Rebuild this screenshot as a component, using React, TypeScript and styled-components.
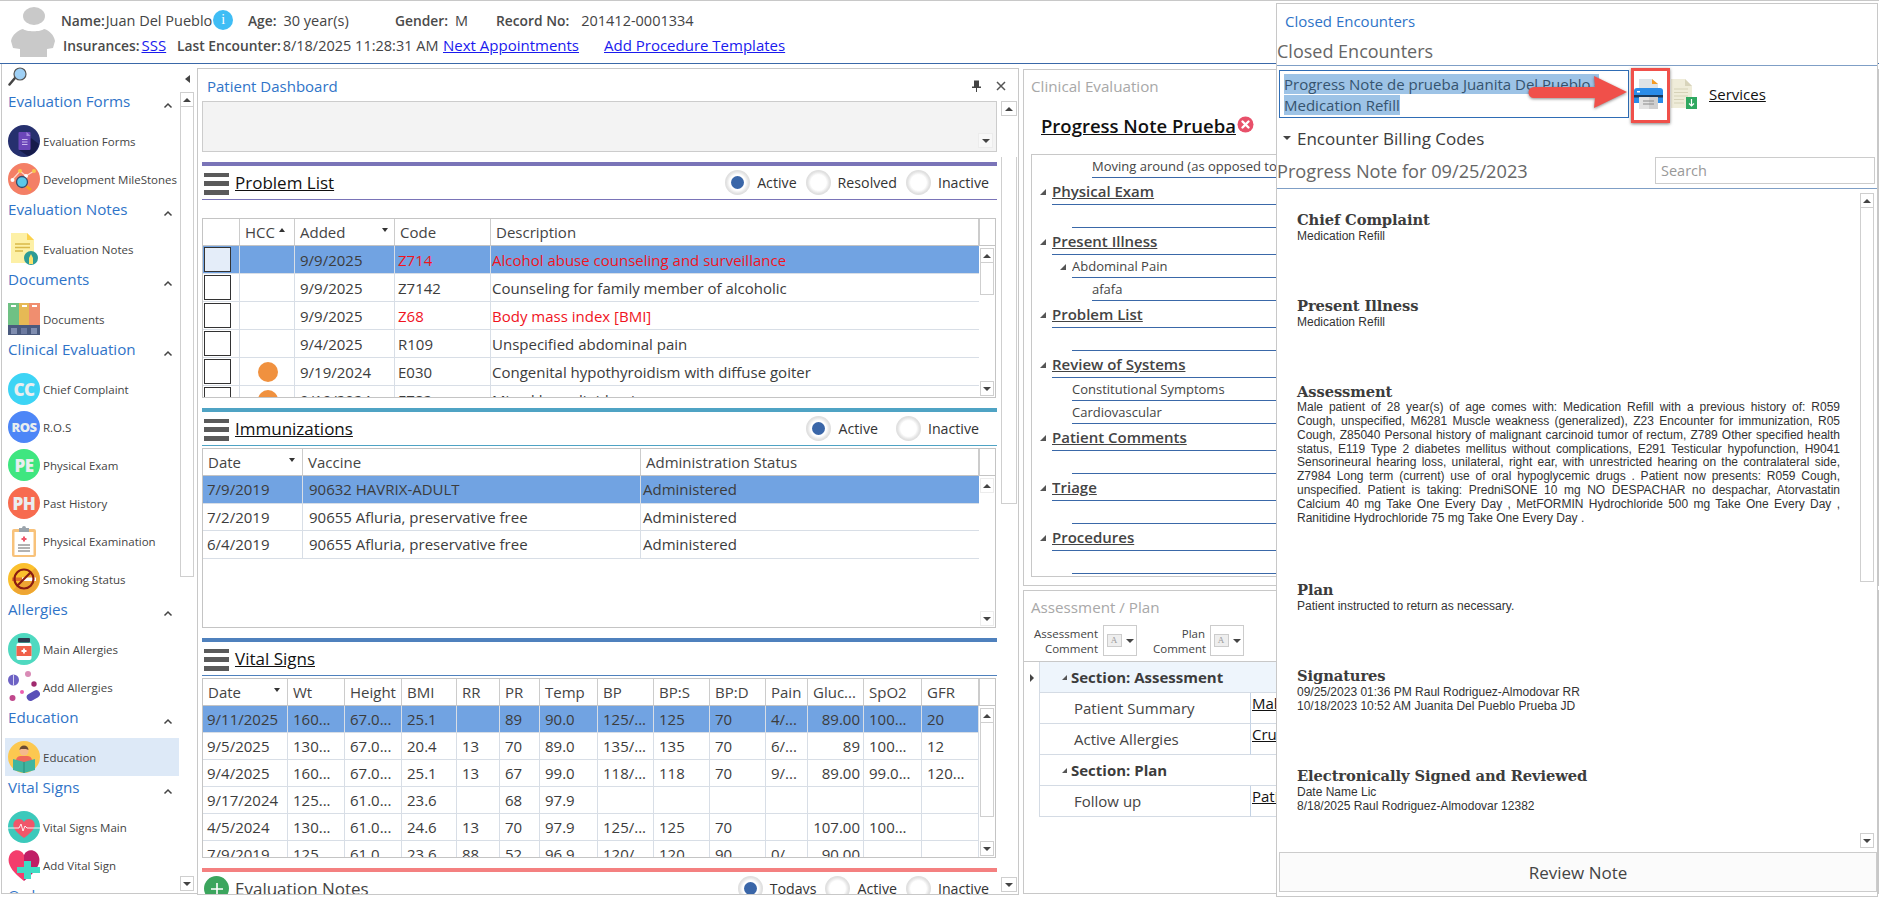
import React from 'react';
import styled, { createGlobalStyle } from 'styled-components';

const Global = createGlobalStyle`
  html, body { margin: 0; padding: 0; background: #fff; overflow: hidden; }
  * { box-sizing: border-box; }
  body { font-family: "Open Sans", "Noto Sans", Arial, sans-serif; color: #333; }
`;

const BLUE_LINE = '#3a68a8';
const TITLE_BLUE = '#2f74c8';

const Page = styled.div`
  position: relative; width: 1879px; height: 898px; overflow: hidden; background: #fff;
  border-top: 1px solid #c8c8c8; display: flex; flex-direction: column;
`;

/* Header */
const Header = styled.header`
  height: 63px; flex: none; border-bottom: 1px solid ${BLUE_LINE}; display: flex; padding-left: 11px; padding-top: 6px;
`;
const HeaderInfo = styled.div`
  margin-left: 6px; display: flex; flex-direction: column; gap: 3px; padding-top: 2px;
`;
const HeaderRow = styled.div<{ $indent?: number }>`
  display: flex; align-items: center; height: 22px; margin-left: ${p => p.$indent ?? 0}px; font-size: 14px; white-space: nowrap;
`;
const Field = styled.div<{ $w: number; $gap?: number }>`
  width: ${p => p.$w}px; display: flex; align-items: center; gap: ${p => p.$gap ?? 4}px; flex: none;
`;
const FieldLabel = styled.span`
  font-weight: 600; color: #4a4a4a; font-size: 13.8px;
`;
const FieldValue = styled.span`
  color: #444; font-size: 14.5px;
`;
const HeaderLink = styled.a`
  color: #1a1aee; text-decoration: underline; font-size: 15px;
`;
const InfoBadge = styled.span`
  width: 20px; height: 20px; border-radius: 50%; background: #3fbdf5; color: #fff; font-size: 14px;
  display: inline-flex; align-items: center; justify-content: center; margin-left: 0; flex: none; font-family: "Liberation Serif", serif;
`;

/* Body */
const Body = styled.main`
  flex: 1; display: flex; min-height: 0; padding-bottom: 3px;
`;

/* Sidebar */
const Sidebar = styled.aside`
  width: 196px; flex: none; margin-left: 1px; border-left: 1px solid #c8c8c8; border-bottom: 1px solid #c8c8c8;
  display: flex; flex-direction: column; margin-bottom: 1px; overflow: hidden;
`;
const SideTop = styled.div`
  height: 26px; flex: none; display: flex; align-items: center; justify-content: space-between; padding: 0 7px 0 6px;
`;
const CollapseArrow = styled.span`
  width: 0; height: 0; border-top: 4px solid transparent; border-bottom: 4px solid transparent; border-right: 5px solid #444; margin-top: 3px;
`;
const SideScroll = styled.div`
  flex: 1; display: flex; min-height: 0;
`;
const SideList = styled.div`
  width: 177px; flex: none; overflow: hidden; padding-left: 3px;
`;
const SideHeading = styled.div`
  height: 32px; display: flex; justify-content: space-between; padding: 0 6px 0 3px; color: ${TITLE_BLUE}; font-size: 15.2px; line-height: 22px; white-space: nowrap;
`;
const SideChevron = styled.svg`
  margin-top: 12px; flex: none;
`;
const SideItem = styled.div<{ $active?: boolean }>`
  height: 38px; display: flex; align-items: center; padding-left: 3px; gap: 3px; font-size: 11.5px; color: #444; white-space: nowrap;
  background: ${p => (p.$active ? '#dde9f7' : 'transparent')};
`;
const LetterBadge = styled.span<{ $bg: string; $size?: number }>`
  width: 32px; height: 32px; border-radius: 50%; background: ${p => p.$bg}; color: #e9eef0; font-weight: 800;
  font-size: ${p => p.$size ?? 17}px; display: flex; align-items: center; justify-content: center; flex: none; letter-spacing: -0.5px;
`;

/* Scrollbars */
const ScrollCol = styled.div<{ $w?: number; $mt?: number; $mb?: number; $ml?: number }>`
  width: ${p => p.$w ?? 15}px; flex: none; display: flex; flex-direction: column;
  margin-top: ${p => p.$mt ?? 0}px; margin-bottom: ${p => p.$mb ?? 0}px; margin-left: ${p => p.$ml ?? 0}px;
`;
const ScrollBtn = styled.div<{ $down?: boolean; $muted?: boolean }>`
  height: 15px; flex: none; border: 1px solid ${p => (p.$muted ? '#ececec' : '#cfcfcf')}; display: flex; align-items: center; justify-content: center;
  &::after {
    content: ''; width: 0; height: 0; border-left: 4px solid transparent; border-right: 4px solid transparent;
    ${p => (p.$down ? 'border-top: 4px solid #444;' : 'border-bottom: 4px solid #444;')}
  }
`;
const ScrollThumb = styled.div<{ $h: number; $mt?: number }>`
  height: ${p => p.$h}px; flex: none; border: 1px solid #cfcfcf; border-top: 0; margin-top: ${p => p.$mt ?? 0}px;
`;
const ScrollGap = styled.div`
  flex: 1;
`;

/* Dashboard */
const Dashboard = styled.section`
  width: 822px; flex: none; margin-top: 4px; border: 1px solid #c8c8c8; display: flex; flex-direction: column; overflow: hidden; padding-left: 4px;
`;
const PanelBar = styled.div`
  height: 32px; flex: none; display: flex; align-items: center; padding: 2px 12px 0 5px;
`;
const PanelTitle = styled.div`
  color: ${TITLE_BLUE}; font-size: 15px; flex: 1;
`;
const DashRow = styled.div`
  flex: 1; display: flex; min-height: 0;
`;
const DashMain = styled.div`
  width: 795px; flex: none; overflow: hidden;
`;
const GreyBox = styled.div`
  height: 51px; background: #f3f3f3; border: 1px solid #ccc; display: flex; justify-content: flex-end; align-items: flex-end; padding: 0 3px 3px 0;
`;
const GreyBoxBtn = styled(ScrollBtn)`
  width: 15px; background: #f8f8f8;
`;
const Section = styled.div`
  margin-top: 10px;
`;
const SectionBar = styled.div<{ $c: string }>`
  height: 4px; background: ${p => p.$c};
`;
const SectionHead = styled.div<{ $c: string; $pr?: number }>`
  height: 34px; border-bottom: 1px solid ${p => p.$c}; display: flex; align-items: center; padding: 0 ${p => p.$pr ?? 8}px 0 2px; gap: 6px;
`;
const Burger = styled.div`
  width: 25px; height: 22px; flex: none; display: flex; flex-direction: column; justify-content: space-between; margin-top: 2px;
  & > i { display: block; height: 4.5px; background: #5a5a5a; }
`;
const SectionTitle = styled.div<{ $plain?: boolean }>`
  font-size: 17px; color: ${p => (p.$plain ? '#444' : '#111')}; text-decoration: ${p => (p.$plain ? 'none' : 'underline')}; flex: 1;
`;
const RadioGroup = styled.div<{ $gap: number }>`
  display: flex; align-items: center; gap: ${p => p.$gap}px;
`;
const RadioItem = styled.div`
  display: flex; align-items: center; gap: 7px; font-size: 14.2px; color: #333;
`;
const RadioRing = styled.span<{ $on?: boolean }>`
  width: 25px; height: 25px; border-radius: 50%; flex: none; display: flex; align-items: center; justify-content: center;
  background: radial-gradient(circle, #fff 0, #fff 44%, #e3e3e3 62%, #d4d4d4 85%, #efefef 100%);
  &::after { content: ''; width: 13px; height: 13px; border-radius: 50%; background: ${p => (p.$on ? '#3a66a8' : '#fff')}; }
`;
const GreenPlus = styled.span`
  width: 25px; height: 25px; border-radius: 50%; background: #3ba55d; color: #fff; flex: none; display: flex; align-items: center; justify-content: center; margin-top: -4px; margin-bottom: -4px;
`;

/* Tables */
const TableFrame = styled.div<{ $mt: number }>`
  margin-top: ${p => p.$mt}px; height: 180px; border: 1px solid #c4c4c4; display: flex; overflow: hidden; width: 794px;
`;
const TableClip = styled.div`
  width: 776px; flex: none; overflow: hidden;
`;
const Table = styled.table`
  border-collapse: separate; border-spacing: 0; table-layout: fixed; width: 776px;
`;
const Col = styled.col<{ $w: number }>`
  width: ${p => p.$w}px;
`;
const Th = styled.th`
  height: 27px; font-weight: 400; font-size: 15px; color: #444; text-align: left; padding: 0 0 0 5px; border-right: 1px solid #ccc; border-bottom: 1px solid #c4c4c4; white-space: nowrap; overflow: hidden;
`;
const ThInner = styled.span<{ $gap?: number }>`
  display: flex; align-items: center;
  & > b { width: 0; height: 0; border-left: 3.5px solid transparent; border-right: 3.5px solid transparent; margin-left: ${p => p.$gap ?? 4}px; margin-bottom: 4px; }
`;
const SortUp = styled.b`
  border-bottom: 4px solid #333;
`;
const SortDown = styled.b`
  border-top: 4px solid #333;
`;
const Tr = styled.tr<{ $h: number; $sel?: boolean }>`
  height: ${p => p.$h}px; background: ${p => (p.$sel ? '#71a3e2' : 'transparent')};
`;
const Td = styled.td<{ $pad?: number; $red?: boolean; $right?: boolean }>`
  padding: 0 ${p => (p.$right ? 3 : 0)}px 0 ${p => p.$pad ?? 5}px; font-size: 15px; color: ${p => (p.$red ? '#f0141e' : '#3c3c3c')};
  border-right: 1px solid #d8dee6; border-bottom: 1px solid #d8dee6; white-space: nowrap; overflow: hidden; text-align: ${p => (p.$right ? 'right' : 'left')};
`;
const TdWide = styled(Td)`
  border-right: 0;
`;
const CheckCell = styled.span<{ $sel?: boolean }>`
  display: block; width: 27px; height: 25px; border: 1px solid #333; background: ${p => (p.$sel ? '#e4edf9' : '#fff')};
`;
const HccDot = styled.span`
  display: block; width: 20px; height: 20px; border-radius: 50%; background: #f0913f; margin-left: 18px;
`;
const SideHeadCell = styled.div`
  height: 27px; flex: none; border-left: 1px solid #ccc; border-bottom: 1px solid #c4c4c4;
`;
const TableSide = styled.div`
  flex: 1; display: flex; flex-direction: column;
`;
const SideScrollWrap = styled.div`
  flex: 1; display: flex; flex-direction: column; padding: 2px 1px 1px 1px; min-height: 0;
`;

/* Clinical column */
const ClinicalCol = styled.div`
  margin-left: 4px; margin-top: 5px; flex: 1; display: flex; flex-direction: column; gap: 4px; min-width: 0;
`;
const ClinicalPanel = styled.section`
  height: 517px; flex: none; border: 1px solid #c8c8c8; padding: 0 7px; overflow: hidden;
`;
const GreyTitle = styled.div`
  color: #a8a8a8; font-size: 15.2px; height: 34px; line-height: 32px;
`;
const NoteHead = styled.div`
  display: flex; align-items: center; gap: 1px; height: 50px; padding: 0 0 8px 10px;
`;
const NoteName = styled.div`
  font-size: 18.5px; font-weight: 600; color: #111; text-decoration: underline; white-space: nowrap;
`;
const TreeBox = styled.div`
  height: 423px; border: 1px solid #c8c8c8; overflow: hidden;
`;
const TreeLine = styled.div<{ $h: number }>`
  height: ${p => p.$h}px; display: flex;
`;
const TreeSlot = styled.div<{ $w: number }>`
  width: ${p => p.$w}px; flex: none; display: flex; justify-content: flex-end; align-items: center; padding-right: 6px;
`;
const ExpandMark = styled.span`
  width: 0; height: 0; border-style: solid; border-width: 0 0 6px 6px; border-color: transparent transparent #555 transparent;
`;
const TreeText = styled.div<{ $bold?: boolean }>`
  flex: 1; border-bottom: 1px solid ${BLUE_LINE}; white-space: nowrap; overflow: hidden; display: flex; align-items: center; color: #444;
  font-size: ${p => (p.$bold ? 15 : 13)}px; font-weight: ${p => (p.$bold ? 600 : 400)}; text-decoration: ${p => (p.$bold ? 'underline' : 'none')};
`;
const AssessPanel = styled.section`
  flex: 1; border: 1px solid #c8c8c8; margin-bottom: 1px; overflow: hidden;
`;
const AssessTitle = styled(GreyTitle)`
  padding-left: 7px;
`;
const AssessTools = styled.div`
  height: 36px; display: flex; align-items: flex-start; padding-left: 2px; gap: 16px;
`;
const ToolGroup = styled.div`
  display: flex; gap: 5px; align-items: center;
`;
const ToolLabel = styled.div<{ $w: number }>`
  width: ${p => p.$w}px; text-align: right; font-size: 11.5px; line-height: 15px; color: #444;
`;
const ToolBox = styled.div`
  width: 34px; height: 31px; border: 1px solid #ccc; display: flex; align-items: center; justify-content: center; gap: 4px;
  & > i { width: 0; height: 0; border-left: 4px solid transparent; border-right: 4px solid transparent; border-top: 4px solid #444; }
`;
const FontGlyph = styled.span`
  width: 15px; height: 13px; border: 1px solid #ccc; background: #eee; color: #999; font-size: 9px; line-height: 11px; text-align: center; font-family: "Liberation Serif", serif;
`;
const GridWrap = styled.div`
  border-top: 1px solid #c8c8c8;
`;
const GridRow = styled.div`
  height: 31px; display: flex;
`;
const GridSelector = styled.div`
  width: 16px; flex: none; display: flex; align-items: center; justify-content: center;
  border-right: 1px solid #d4dbe4;
`;
const SelectorMark = styled.span`
  width: 0; height: 0; border-top: 4px solid transparent; border-bottom: 4px solid transparent; border-left: 4px solid #444;
`;
const GroupCell = styled.div<{ $hl?: boolean }>`
  flex: 1; display: flex; align-items: center; padding-left: 22px; gap: 4px; font-weight: 700; font-size: 15px; color: #3c3c3c;
  background: ${p => (p.$hl ? '#eef5fc' : '#fff')}; border-bottom: 1px solid #d4dbe4;
`;
const SmallExpand = styled(ExpandMark)`
  border-width: 0 0 5px 5px;
`;
const LabelCell = styled.div`
  width: 210px; flex: none; padding: 0 0 1px 34px; display: flex; align-items: center; font-size: 15px; color: #444;
  border-bottom: 1px solid #d4dbe4;
`;
const ValueCell = styled.div`
  flex: 1; border-left: 1px solid #c3d2e4; border-bottom: 1px solid #d4dbe4; font-size: 15px; line-height: 20px; color: #111; padding-left: 1px; overflow: hidden; white-space: nowrap;
  text-decoration: underline;
`;

/* Flyout */
const Flyout = styled.aside`
  position: absolute; left: 1276px; top: 2px; width: 602px; height: 894px; background: #fff; border: 1px solid #c8c8c8; display: flex; flex-direction: column;
`;
const FlyTitle = styled.div`
  height: 34px; flex: none; padding: 4px 0 0 8px; color: ${TITLE_BLUE}; font-size: 15px; line-height: 26px;
`;
const FlyBig = styled.div`
  height: 28px; flex: none; border-bottom: 1px solid #7f9fc6; font-size: 18px; color: #666; line-height: 26px;
`;
const PickerRow = styled.div`
  height: 58px; flex: none; display: flex; align-items: flex-start; padding: 4px 0 0 2px;
`;
const Dropdown = styled.div`
  width: 350px; height: 48px; flex: none; border: 1px solid #2f6db5; padding: 3px 0 0 4px; font-size: 15px; line-height: 21px; color: #35536f; white-space: nowrap; overflow: hidden;
`;
const DropText = styled.span`
  background: #9dc3e6;
`;
const PrinterSlot = styled.div`
  margin-left: 5px; margin-top: 9px; flex: none; display: flex; gap: 7px; align-items: center;
`;
const ServicesLink = styled.a`
  margin-left: 5px; font-size: 15px; color: #111; text-decoration: underline;
`;
const RedBox = styled.div`
  position: absolute; left: 354px; top: 64px; width: 39px; height: 55px; border: 3px solid #f0504a; box-shadow: 0 1px 3px rgba(0,0,0,.5);
`;
const ArrowOverlay = styled.svg`
  position: absolute; left: 250px; top: 70px; filter: drop-shadow(0 1px 1.5px rgba(0,0,0,.45));
`;
const BillingRow = styled.div`
  height: 30px; flex: none; display: flex; align-items: center; padding: 0 0 2px 6px; gap: 6px; font-size: 17px; color: #3c3c3c;
`;
const DownMark = styled.span`
  width: 0; height: 0; border-left: 4px solid transparent; border-right: 4px solid transparent; border-top: 4px solid #444;
`;
const NoteTitleRow = styled.div`
  height: 35px; flex: none; display: flex; align-items: center; justify-content: space-between; padding: 0 2px 1px 0; border-bottom: 1px solid #7f9fc6;
`;
const NoteTitle = styled.div`
  font-size: 18.2px; color: #666;
`;
const SearchBox = styled.div`
  width: 220px; height: 27px; border: 1px solid #ccc; font-size: 14.5px; color: #999; line-height: 26px; padding-left: 5px;
`;
const NoteRow = styled.div`
  flex: 1; display: flex; min-height: 0; justify-content: space-between; padding-right: 3px;
`;
const NoteBody = styled.div`
  width: 563px; padding: 22px 0 0 20px; font-family: "Liberation Sans", Arial, sans-serif; font-size: 12px; line-height: 14px; color: #333; overflow: hidden;
`;
const Block = styled.div<{ $after?: number }>`
  margin-bottom: ${p => p.$after ?? 54}px;
`;
const BlockHead = styled.div`
  font-family: "DejaVu Serif", "Liberation Serif", serif; font-weight: 700; font-size: 14.7px; line-height: 18px; color: #3c3c3c; letter-spacing: -0.1px;
`;
const JustLine = styled.div<{ $last?: boolean }>`
  line-height: 13.85px; height: 13.85px; white-space: normal; text-align: justify; text-align-last: ${p => (p.$last ? 'left' : 'justify')};
`;
const ReviewBtn = styled.div`
  height: 40px; flex: none; margin: 0 0 4px 2px; border: 1px solid #ccc; background: #fbfbfb; display: flex; align-items: center; justify-content: center; font-size: 17px; color: #444;
`;

/* Drawings */
const Search = () => (
  <svg width="20" height="20" viewBox="0 0 20 20">
    <path d="M7 11 L1.5 17.5" stroke="#444" strokeWidth="2.5" strokeLinecap="round" />
    <circle cx="12" cy="7" r="6" fill="#9fd0f5" stroke="#555" strokeWidth="1.2" />
  </svg>
);
const Avatar = () => (
  <svg width="44" height="50" viewBox="0 0 44 50" style={{ flex: 'none' }}>
    <ellipse cx="23" cy="9" rx="11" ry="9" fill="#c9c9c9" />
    <path d="M12 22 C15 25 30 25 33 22 C38 23 43 28 44 34 L42 41 L36 42 L36 50 L9 50 L9 42 L2 41 L0 34 C1 28 7 23 12 22Z" fill="#c9c9c9" />
  </svg>
);
const Chevron = () => (
  <SideChevron width="10" height="7" viewBox="0 0 10 7"><polyline points="1.5,5.5 5,2 8.5,5.5" fill="none" stroke="#444" strokeWidth="1.5" /></SideChevron>
);
const FormsIcon = () => (
  <svg width="32" height="32" viewBox="0 0 32 32">
    <circle cx="16" cy="16" r="16" fill="#26306e" />
    <path d="M11 25 L23 13 L31 19 A16 16 0 0 1 20 31Z" fill="#161b4a" />
    <rect x="10.5" y="7" width="12" height="18" rx="1" fill="#6b46b9" />
    <path d="M18.5 7 L22.5 11 L18.5 11Z" fill="#a78be0" />
    <path d="M14 14.5h5.5M14 17h5.5M14 19.5h5.5" stroke="#c9b8ee" strokeWidth="1" />
  </svg>
);
const DevIcon = () => (
  <svg width="32" height="32" viewBox="0 0 32 32">
    <circle cx="16" cy="16" r="16" fill="#f47f66" />
    <polyline points="4,17 12,8 18,13 26,8" fill="none" stroke="#ffd9cc" strokeWidth="1.2" />
    <circle cx="12" cy="8" r="2" fill="#f7c94f" /><circle cx="18" cy="13" r="2" fill="#fff" /><circle cx="26" cy="8" r="2" fill="#f7c94f" /><circle cx="4.5" cy="17" r="2" fill="#fff" />
    <path d="M18 23 L23 27" stroke="#f5a623" strokeWidth="2.5" />
    <circle cx="14" cy="19" r="5.5" fill="#5bc8e8" stroke="#374a6b" strokeWidth="1.3" />
  </svg>
);
const NotesIcon = () => (
  <svg width="32" height="32" viewBox="0 0 32 32">
    <path d="M3 0 H19 L26 7 V30 H3Z" fill="#fdf0a6" />
    <path d="M19 0 L26 7 H19Z" fill="#fbd24e" />
    <path d="M7 11h15M7 14.5h15M7 18h8" stroke="#d9b94a" strokeWidth="1.4" />
    <circle cx="23" cy="25" r="7" fill="#2d9c96" />
    <path d="M21 31 V25 L23 21 L25 25 V31Z" fill="#fde26a" />
  </svg>
);
const DocsIcon = () => (
  <svg width="32" height="32" viewBox="0 0 32 32">
    <rect width="11" height="23" fill="#6fc184" /><rect x="11" width="10" height="23" fill="#e6b955" /><rect x="21" width="11" height="23" fill="#f08e6f" />
    <path d="M3 3h5M14 3h5M24 3h5" stroke="#fff" strokeWidth="2" />
    <rect y="22" width="32" height="10" fill="#4a5a7e" />
    <rect x="3" y="25" width="6" height="6" fill="#7f8db0" /><rect x="13" y="25" width="6" height="6" fill="#6c7aa0" /><rect x="23" y="25" width="6" height="6" fill="#7f8db0" />
  </svg>
);
const ClipIcon = () => (
  <svg width="32" height="32" viewBox="0 0 32 32">
    <rect x="4" y="4" width="24" height="28" rx="2" fill="#f8c27a" />
    <rect x="6.5" y="7" width="19" height="23" fill="#fff" />
    <path d="M11 7 V3 H14 A2 2 0 0 1 18 3 H21 V7Z" fill="#9aa3ab" />
    <path d="M16 11.5 v5 M13.5 14 h5" stroke="#f0566a" strokeWidth="2" />
    <path d="M10 20h12M10 23h12M10 26h12" stroke="#666" strokeWidth="1" />
  </svg>
);
const SmokeIcon = () => (
  <svg width="32" height="32" viewBox="0 0 32 32">
    <circle cx="16" cy="16" r="16" fill="#fbc02d" />
    <path d="M5 27 L27 5 A16 16 0 0 1 16 32 A16 16 0 0 1 5 27Z" fill="#eea533" />
    <rect x="4" y="14.5" width="10" height="3.5" fill="#e0722b" /><rect x="14" y="14.5" width="14" height="3.5" fill="#fff" />
    <circle cx="16" cy="16" r="9.5" fill="none" stroke="#8a1c12" strokeWidth="2.2" />
    <path d="M9.5 22.5 L22.5 9.5" stroke="#8a1c12" strokeWidth="2.2" />
  </svg>
);
const BottleIcon = () => (
  <svg width="32" height="32" viewBox="0 0 32 32">
    <circle cx="16" cy="16" r="16" fill="#4fd9c0" />
    <rect x="10" y="5" width="12" height="4.5" rx="1" fill="#2e3a4d" />
    <rect x="8.5" y="10" width="15" height="17" rx="2" fill="#fff" />
    <rect x="8.5" y="13" width="15" height="10" fill="#f0604a" />
    <path d="M16 15.5v5M13.5 18h5" stroke="#fff" strokeWidth="1.8" />
  </svg>
);
const PillsIcon = () => (
  <svg width="32" height="32" viewBox="0 0 32 32">
    <circle cx="5.5" cy="9" r="5.5" fill="#6d62c4" /><path d="M5.5 3.5v11" stroke="#d8d4f2" strokeWidth="1" />
    <circle cx="20" cy="3" r="3" fill="#d98bb6" /><circle cx="26" cy="13" r="2.7" fill="#a02a6e" />
    <circle cx="4.5" cy="27" r="3" fill="#c0488c" /><circle cx="14" cy="21" r="2" fill="#ec5fb0" />
    <rect x="18.5" y="21" width="14" height="7.5" rx="3.7" fill="#5a50b8" transform="rotate(-30 25 25)" />
  </svg>
);
const EduIcon = () => (
  <svg width="32" height="32" viewBox="0 0 32 32">
    <circle cx="16" cy="16" r="16" fill="#fcc850" />
    <circle cx="16" cy="10" r="4.5" fill="#f5b98d" />
    <path d="M11.5 9 A4.5 4.5 0 0 1 20.5 9 L18 8 L13 8Z" fill="#6b4a32" />
    <path d="M8 26 V19 A5 5 0 0 1 13 15 H19 A5 5 0 0 1 24 19 V26Z" fill="#ef6a5a" />
    <path d="M5 18 L16 21 L27 18 V29 L16 32 L5 29Z" fill="#3fb5a0" />
    <path d="M16 21 V32" stroke="#2a8c7b" strokeWidth="1" />
  </svg>
);
const VitalIcon = () => (
  <svg width="32" height="32" viewBox="0 0 32 32">
    <circle cx="16" cy="16" r="16" fill="#3cc9bb" />
    <path d="M16 27 C6 20 4 15 6 11 C8 7 14 7 16 11 C18 7 24 7 26 11 C28 15 26 20 16 27Z" fill="#f0566a" />
    <polyline points="0,17 11,17 13,13 15,20 17,15 19,17 32,17" fill="none" stroke="#fff" strokeWidth="0.9" />
  </svg>
);
const AddVitalIcon = () => (
  <svg width="32" height="32" viewBox="0 0 32 32">
    <path d="M16 32 C4 23 -1 15 1 8 C3 0 13 -1 16 6 V32Z" fill="#f43d6c" />
    <path d="M16 32 C28 23 33 15 31 8 C29 0 19 -1 16 6 V32Z" fill="#c01e66" />
    <path d="M16 13 h7 v6 h9 v6 h-9 v6 h-7 v-6 h-7 v-6 h7Z" fill="#3fdcc4" transform="translate(0,-1)" />
  </svg>
);
const RemoveIcon = () => (
  <svg width="17" height="17" viewBox="0 0 17 17" style={{ flex: 'none', marginTop: -2 }}>
    <circle cx="8.5" cy="8.5" r="8" fill="#e8506a" />
    <path d="M5.5 5.5 L11.5 11.5 M11.5 5.5 L5.5 11.5" stroke="#fff" strokeWidth="2.4" strokeLinecap="round" />
  </svg>
);
const PinIcon = () => (
  <svg width="11" height="12" viewBox="0 0 11 12" style={{ marginRight: 14 }}>
    <path d="M3 0.5 H8 V6.5 H10 V8 H6 V12 H5 V8 H1 V6.5 H3Z" fill="#444" />
  </svg>
);
const CloseIcon = () => (
  <svg width="10" height="10" viewBox="0 0 10 10"><path d="M1 1 L9 9 M9 1 L1 9" stroke="#555" strokeWidth="1.5" /></svg>
);
const PlusGlyph = () => (
  <svg width="14" height="14" viewBox="0 0 14 14"><path d="M7 1v12M1 7h12" stroke="#fff" strokeWidth="1.6" /></svg>
);
const PrinterIcon = () => (
  <svg width="30" height="30" viewBox="0 0 30 30" style={{ flex: 'none' }}>
    <path d="M5 0 H18 L24 5 V13 H5Z" fill="#dfe3e6" />
    <path d="M18 0 L24 5 H18Z" fill="#f59b23" />
    <path d="M3 9 H26 A3 3 0 0 1 29 12 V24 H0 V12 A3 3 0 0 1 3 9Z" fill="#2a8ce8" />
    <rect x="0" y="16" width="29" height="2.5" fill="#1a3a5c" />
    <rect x="3" y="12" width="3" height="1.5" fill="#fff" />
    <rect x="5" y="18" width="19" height="12" fill="#e2e2e2" />
    <rect x="15" y="18" width="9" height="12" fill="#cfcfcf" />
    <path d="M9 22h11M9 25h11" stroke="#8a8a8a" strokeWidth="1" />
  </svg>
);
const DocDownIcon = () => (
  <svg width="26" height="30" viewBox="0 0 26 30" style={{ flex: 'none' }}>
    <path d="M0 0 H14 L21 7 V29 H0Z" fill="#efecd9" />
    <path d="M14 0 L21 7 H14Z" fill="#d8d4bb" />
    <path d="M3 10h14M3 13.5h14M3 17h14M3 20.5h10M3 24h10" stroke="#d6d2b8" strokeWidth="1.2" />
    <rect x="15" y="18" width="11" height="12" fill="#2fa860" />
    <path d="M20.5 20v7M18 24.5l2.5 2.5 2.5-2.5" stroke="#fff" strokeWidth="1.2" fill="none" />
  </svg>
);

/* Table data */
const problems = [
  { d: '9/9/2025', c: 'Z714', t: 'Alcohol abuse counseling and surveillance', red: true, sel: true },
  { d: '9/9/2025', c: 'Z7142', t: 'Counseling for family member of alcoholic' },
  { d: '9/9/2025', c: 'Z68', t: 'Body mass index [BMI]', red: true },
  { d: '9/4/2025', c: 'R109', t: 'Unspecified abdominal pain' },
  { d: '9/19/2024', c: 'E030', t: 'Congenital hypothyroidism with diffuse goiter', hcc: true },
  { d: '9/19/2024', c: 'E782', t: 'Mixed hyperlipidemia', hcc: true },
];
const immunizations = [
  ['7/9/2019', '90632 HAVRIX-ADULT', 'Administered'],
  ['7/2/2019', '90655 Afluria, preservative free', 'Administered'],
  ['6/4/2019', '90655 Afluria, preservative free', 'Administered'],
];
const vitalCols = [85, 57, 57, 55, 43, 40, 58, 56, 56, 56, 42, 56, 58, 57];
const vitalHead = ['Wt', 'Height', 'BMI', 'RR', 'PR', 'Temp', 'BP', 'BP:S', 'BP:D', 'Pain', 'Gluc...', 'SpO2', 'GFR'];
const vitals = [
  ['9/11/2025', '160...', '67.0...', '25.1', '', '89', '90.0', '125/...', '125', '70', '4/...', '89.00', '100...', '20'],
  ['9/5/2025', '130...', '67.0...', '20.4', '13', '70', '89.0', '135/...', '135', '70', '6/...', '89', '100...', '12'],
  ['9/4/2025', '160...', '67.0...', '25.1', '13', '67', '99.0', '118/...', '118', '70', '9/...', '89.00', '99.0...', '120...'],
  ['9/17/2024', '125...', '61.0...', '23.6', '', '68', '97.9', '', '', '', '', '', '', ''],
  ['4/5/2024', '130...', '61.0...', '24.6', '13', '70', '97.9', '125/...', '125', '70', '', '107.00', '100...', ''],
  ['7/9/2019', '125...', '61.0...', '23.6', '88', '52', '96.9', '120/...', '120', '90', '0/...', '90.00', '', ''],
];
const assessmentLines = [
  'Male patient of 28 year(s) of age comes with: Medication Refill with a previous history of: R059',
  'Cough, unspecified, M6281 Muscle weakness (generalized), Z23 Encounter for immunization, R05',
  'Cough, Z85040 Personal history of malignant carcinoid tumor of rectum, Z789 Other specified health',
  'status, E119 Type 2 diabetes mellitus without complications, E291 Testicular hypofunction, H9041',
  'Sensorineural hearing loss, unilateral, right ear, with unrestricted hearing on the contralateral side,',
  'Z7984 Long term (current) use of oral hypoglycemic drugs . Patient now presents: R059 Cough,',
  'unspecified. Patient is taking: PredniSONE 10 mg NO DESPACHAR no despachar, Atorvastatin',
  'Calcium 40 mg Take One Every Day , MetFORMIN Hydrochloride 500 mg Take One Every Day ,',
  'Ranitidine Hydrochloride 75 mg Take One Every Day .',
];

type Side = { h: string; items: [string, React.ReactNode, boolean?][] };
const sideGroups: Side[] = [
  { h: 'Evaluation Forms', items: [['Evaluation Forms', <FormsIcon />], ['Development MileStones', <DevIcon />]] },
  { h: 'Evaluation Notes', items: [['Evaluation Notes', <NotesIcon />]] },
  { h: 'Documents', items: [['Documents', <DocsIcon />]] },
  {
    h: 'Clinical Evaluation',
    items: [
      ['Chief Complaint', <LetterBadge $bg="#3dd4f5">CC</LetterBadge>],
      ['R.O.S', <LetterBadge $bg="#4d86f7" $size={13}>ROS</LetterBadge>],
      ['Physical Exam', <LetterBadge $bg="#3fe680">PE</LetterBadge>],
      ['Past History', <LetterBadge $bg="#f76b4f">PH</LetterBadge>],
      ['Physical Examination', <ClipIcon />],
      ['Smoking Status', <SmokeIcon />],
    ],
  },
  { h: 'Allergies', items: [['Main Allergies', <BottleIcon />], ['Add Allergies', <PillsIcon />]] },
  { h: 'Education', items: [['Education', <EduIcon />, true]] },
  { h: 'Vital Signs', items: [['Vital Signs Main', <VitalIcon />], ['Add Vital Sign', <AddVitalIcon />]] },
  { h: 'Order', items: [] },
];

const tree: [string, number, boolean, boolean][] = [
  ['Moving around (as opposed to', 60, false, false],
  ['Physical Exam', 20, true, true],
  ['', 40, false, false],
  ['Present Illness', 20, true, true],
  ['Abdominal Pain', 40, false, true],
  ['afafa', 60, false, false],
  ['Problem List', 20, true, true],
  ['', 40, false, false],
  ['Review of Systems', 20, true, true],
  ['Constitutional Symptoms', 40, false, false],
  ['Cardiovascular', 40, false, false],
  ['Patient Comments', 20, true, true],
  ['', 40, false, false],
  ['Triage', 20, true, true],
  ['', 40, false, false],
  ['Procedures', 20, true, true],
  ['', 40, false, false],
];

const Radios = ({ items, gap = 9 }: { items: string[]; gap?: number }) => (
  <RadioGroup $gap={gap}>
    {items.map((t, i) => (
      <RadioItem key={t}><RadioRing $on={i === 0} />{t}</RadioItem>
    ))}
  </RadioGroup>
);

const TableScroll = ({ thumb, muted }: { thumb?: number; muted?: boolean }) => (
  <TableSide>
    <SideHeadCell />
    <SideScrollWrap>
      <ScrollBtn $muted={muted} />
      {thumb ? <ScrollThumb $h={thumb} /> : null}
      <ScrollGap />
      <ScrollBtn $down $muted={muted} />
    </SideScrollWrap>
  </TableSide>
);

export default function App() {
  return (
    <>
      <Global />
      <Page>
        <Header>
          <Avatar />
          <HeaderInfo>
            <HeaderRow>
              <Field $w={187} $gap={1}><FieldLabel>Name:</FieldLabel><FieldValue>Juan Del Pueblo</FieldValue><InfoBadge>i</InfoBadge></Field>
              <Field $w={147} $gap={7}><FieldLabel>Age:</FieldLabel><FieldValue>30 year(s)</FieldValue></Field>
              <Field $w={101} $gap={7}><FieldLabel>Gender:</FieldLabel><FieldValue>M</FieldValue></Field>
              <Field $w={220} $gap={12}><FieldLabel>Record No:</FieldLabel><FieldValue>201412-0001334</FieldValue></Field>
            </HeaderRow>
            <HeaderRow $indent={2}>
              <Field $w={114} $gap={2}><FieldLabel>Insurances:</FieldLabel><HeaderLink>SSS</HeaderLink></Field>
              <Field $w={266} $gap={2}><FieldLabel>Last Encounter:</FieldLabel><FieldValue>8/18/2025 11:28:31 AM</FieldValue></Field>
              <Field $w={161}><HeaderLink>Next Appointments</HeaderLink></Field>
              <Field $w={200}><HeaderLink>Add Procedure Templates</HeaderLink></Field>
            </HeaderRow>
          </HeaderInfo>
        </Header>

        <Body>
          <Sidebar>
            <SideTop><Search /><CollapseArrow /></SideTop>
            <SideScroll>
              <SideList>
                {sideGroups.map(g => (
                  <React.Fragment key={g.h}>
                    <SideHeading>{g.h}<Chevron /></SideHeading>
                    {g.items.map(([label, icon, active]) => (
                      <SideItem key={label} $active={active}>{icon}{label}</SideItem>
                    ))}
                  </React.Fragment>
                ))}
              </SideList>
              <ScrollCol $w={14} $ml={1} $mt={2} $mb={2}>
                <ScrollBtn />
                <ScrollThumb $h={470} />
                <ScrollGap />
                <ScrollBtn $down />
              </ScrollCol>
            </SideScroll>
          </Sidebar>

          <Dashboard>
            <PanelBar><PanelTitle>Patient Dashboard</PanelTitle><PinIcon /><CloseIcon /></PanelBar>
            <DashRow>
              <DashMain>
                <GreyBox><GreyBoxBtn $down $muted /></GreyBox>

                <Section>
                  <SectionBar $c="#7a74b8" />
                  <SectionHead $c="#7a74b8">
                    <Burger><i /><i /><i /></Burger>
                    <SectionTitle>Problem List</SectionTitle>
                    <Radios items={['Active', 'Resolved', 'Inactive']} />
                  </SectionHead>
                  <TableFrame $mt={18}>
                    <TableClip>
                      <Table>
                        <colgroup><Col $w={37} /><Col $w={55} /><Col $w={100} /><Col $w={96} /><Col $w={488} /></colgroup>
                        <thead>
                          <tr>
                            <Th />
                            <Th><ThInner $gap={4}>HCC<SortUp /></ThInner></Th>
                            <Th><ThInner $gap={37}>Added<SortDown /></ThInner></Th>
                            <Th>Code</Th>
                            <Th>Description</Th>
                          </tr>
                        </thead>
                        <tbody>
                          {problems.map((r, i) => (
                            <Tr key={i} $h={28} $sel={r.sel}>
                              <Td $pad={1}><CheckCell $sel={r.sel} /></Td>
                              <Td $pad={0}>{r.hcc ? <HccDot /> : null}</Td>
                              <Td>{r.d}</Td>
                              <Td $pad={3} $red={r.red}>{r.c}</Td>
                              <TdWide $pad={1} $red={r.red}>{r.t}</TdWide>
                            </Tr>
                          ))}
                        </tbody>
                      </Table>
                    </TableClip>
                    <TableScroll thumb={32} />
                  </TableFrame>
                </Section>

                <Section>
                  <SectionBar $c="#4fa3c4" />
                  <SectionHead $c="#4fa3c4" $pr={18}>
                    <Burger><i /><i /><i /></Burger>
                    <SectionTitle>Immunizations</SectionTitle>
                    <Radios items={['Active', 'Inactive']} gap={18} />
                  </SectionHead>
                  <TableFrame $mt={2}>
                    <TableClip>
                      <Table>
                        <colgroup><Col $w={100} /><Col $w={338} /><Col $w={338} /></colgroup>
                        <thead>
                          <tr>
                            <Th><ThInner $gap={48}>Date<SortDown /></ThInner></Th>
                            <Th>Vaccine</Th>
                            <Th>Administration Status</Th>
                          </tr>
                        </thead>
                        <tbody>
                          {immunizations.map((r, i) => (
                            <Tr key={i} $h={27.5} $sel={i === 0}>
                              <Td $pad={4}>{r[0]}</Td>
                              <Td $pad={6}>{r[1]}</Td>
                              <TdWide $pad={2}>{r[2]}</TdWide>
                            </Tr>
                          ))}
                        </tbody>
                      </Table>
                    </TableClip>
                    <TableScroll muted />
                  </TableFrame>
                </Section>

                <Section>
                  <SectionBar $c="#4f81bd" />
                  <SectionHead $c="#4f81bd">
                    <Burger><i /><i /><i /></Burger>
                    <SectionTitle>Vital Signs</SectionTitle>
                  </SectionHead>
                  <TableFrame $mt={2}>
                    <TableClip>
                      <Table>
                        <colgroup>{vitalCols.map((w, i) => <Col key={i} $w={w} />)}</colgroup>
                        <thead>
                          <tr>
                            <Th><ThInner $gap={33}>Date<SortDown /></ThInner></Th>
                            {vitalHead.map(h => <Th key={h}>{h}</Th>)}
                          </tr>
                        </thead>
                        <tbody>
                          {vitals.map((r, i) => (
                            <Tr key={i} $h={27} $sel={i === 0}>
                              {r.map((c, j) => (
                                <Td key={j} $pad={j === 0 ? 4 : 5} $right={j === 11}>{c}</Td>
                              ))}
                            </Tr>
                          ))}
                        </tbody>
                      </Table>
                    </TableClip>
                    <TableScroll thumb={94} />
                  </TableFrame>
                </Section>

                <Section>
                  <SectionBar $c="#f48080" />
                  <SectionHead $c="#f48080">
                    <GreenPlus><PlusGlyph /></GreenPlus>
                    <SectionTitle $plain>Evaluation Notes</SectionTitle>
                    <Radios items={['Todays', 'Active', 'Inactive']} />
                  </SectionHead>
                </Section>
              </DashMain>
              <ScrollCol $w={16} $ml={4} $mb={2}>
                <ScrollBtn />
                <ScrollThumb $h={347} $mt={41} />
                <ScrollGap />
                <ScrollBtn $down />
              </ScrollCol>
            </DashRow>
          </Dashboard>

          <ClinicalCol>
            <ClinicalPanel>
              <GreyTitle>Clinical Evaluation</GreyTitle>
              <NoteHead><NoteName>Progress Note Prueba</NoteName><RemoveIcon /></NoteHead>
              <TreeBox>
                {tree.map(([t, slot, bold, exp], i) => (
                  <TreeLine key={i} $h={bold ? 27 : 23}>
                    <TreeSlot $w={slot}>{exp ? <ExpandMark /> : null}</TreeSlot>
                    <TreeText $bold={bold}>{t}</TreeText>
                  </TreeLine>
                ))}
              </TreeBox>
            </ClinicalPanel>
            <AssessPanel>
              <AssessTitle>Assessment / Plan</AssessTitle>
              <AssessTools>
                <ToolGroup>
                  <ToolLabel $w={72}>Assessment Comment</ToolLabel>
                  <ToolBox><FontGlyph>A</FontGlyph><i /></ToolBox>
                </ToolGroup>
                <ToolGroup>
                  <ToolLabel $w={52}>Plan Comment</ToolLabel>
                  <ToolBox><FontGlyph>A</FontGlyph><i /></ToolBox>
                </ToolGroup>
              </AssessTools>
              <GridWrap>
                <GridRow><GridSelector><SelectorMark /></GridSelector><GroupCell $hl><SmallExpand />Section: Assessment</GroupCell></GridRow>
                <GridRow><GridSelector /><LabelCell>Patient Summary</LabelCell><ValueCell>Male patient</ValueCell></GridRow>
                <GridRow><GridSelector /><LabelCell>Active Allergies</LabelCell><ValueCell>Crustacean</ValueCell></GridRow>
                <GridRow><GridSelector /><GroupCell><SmallExpand />Section: Plan</GroupCell></GridRow>
                <GridRow><GridSelector /><LabelCell>Follow up</LabelCell><ValueCell>Patient instructed</ValueCell></GridRow>
              </GridWrap>
            </AssessPanel>
          </ClinicalCol>
        </Body>

        <Flyout>
          <FlyTitle>Closed Encounters</FlyTitle>
          <FlyBig>Closed Encounters</FlyBig>
          <PickerRow>
            <Dropdown><DropText>Progress Note de prueba Juanita Del Pueblo -<br />Medication Refill</DropText></Dropdown>
            <PrinterSlot>
              <PrinterIcon />
              <DocDownIcon />
              <ServicesLink>Services</ServicesLink>
            </PrinterSlot>
          </PickerRow>
          <BillingRow><DownMark />Encounter Billing Codes</BillingRow>
          <NoteTitleRow>
            <NoteTitle>Progress Note for 09/25/2023</NoteTitle>
            <SearchBox>Search</SearchBox>
          </NoteTitleRow>
          <NoteRow>
            <NoteBody>
              <Block><BlockHead>Chief Complaint</BlockHead>Medication Refill</Block>
              <Block><BlockHead>Present Illness</BlockHead>Medication Refill</Block>
              <Block $after={55}>
                <BlockHead>Assessment</BlockHead>
                {assessmentLines.map((l, i) => (
                  <JustLine key={i} $last={i === assessmentLines.length - 1}>{l}</JustLine>
                ))}
              </Block>
              <Block><BlockHead>Plan</BlockHead>Patient instructed to return as necessary.</Block>
              <Block>
                <BlockHead>Signatures</BlockHead>
                09/25/2023 01:36 PM Raul Rodriguez-Almodovar RR<br />
                10/18/2023 10:52 AM Juanita Del Pueblo Prueba JD
              </Block>
              <Block>
                <BlockHead>Electronically Signed and Reviewed</BlockHead>
                Date Name Lic<br />
                8/18/2025 Raul Rodriguez-Almodovar 12382
              </Block>
            </NoteBody>
            <ScrollCol $w={14} $mt={4} $mb={4}>
              <ScrollBtn />
              <ScrollThumb $h={374} />
              <ScrollGap />
              <ScrollBtn $down />
            </ScrollCol>
          </NoteRow>
          <ReviewBtn>Review Note</ReviewBtn>
          <RedBox />
          <ArrowOverlay width="104" height="36" viewBox="0 0 104 36">
            <path d="M7 13 H68 L67 2 L100 18 L67 34 L68 24 H7 A5.5 5.5 0 0 1 7 13Z" fill="#f0504a" />
          </ArrowOverlay>
        </Flyout>
      </Page>
    </>
  );
}
